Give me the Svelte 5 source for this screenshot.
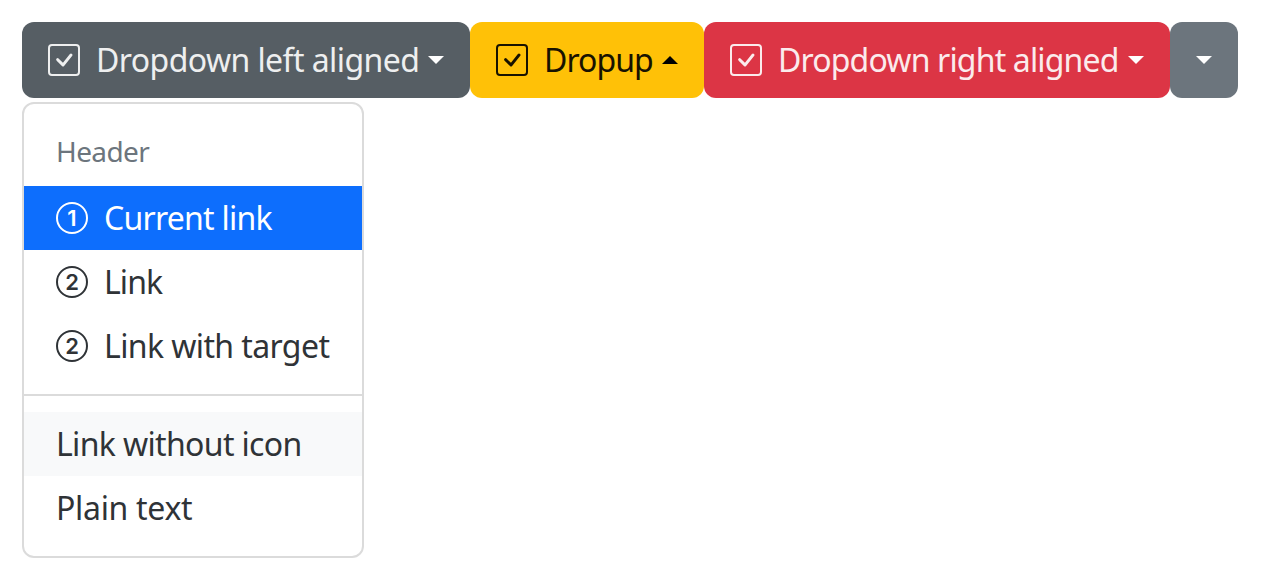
<script>
  const buttons = [
    { kind: 'dark', label: 'Dropdown left aligned', spacing: -0.58, caret: 'down', width: 448 },
    { kind: 'warning', label: 'Dropup', spacing: -0.95, caret: 'up', width: 234 },
    { kind: 'danger', label: 'Dropdown right aligned', spacing: -0.84, caret: 'down', width: 466 },
    { kind: 'secondary', label: '', spacing: 0, caret: 'down', width: 68 }
  ];
  const links = [
    { label: 'Current link', digit: '1', active: true, spacing: -0.76 },
    { label: 'Link', digit: '2', active: false, spacing: -0.9 },
    { label: 'Link with target', digit: '2', active: false, spacing: -0.6 }
  ];
  const plain = [
    { label: 'Link without icon', hover: true, spacing: -0.65 },
    { label: 'Plain text', hover: false, spacing: -0.3 }
  ];
</script>

<main>
  <div class="toolbar">
    {#each buttons as b}
      <button class="btn {b.kind}" class:bare={!b.label} style="width: {b.width}px" aria-label={b.label || 'More'}>
        {#if b.label}
          <svg class="icon" viewBox="0 0 16 16" fill="currentColor">
            <path d="M14 1a1 1 0 0 1 1 1v12a1 1 0 0 1-1 1H2a1 1 0 0 1-1-1V2a1 1 0 0 1 1-1zM2 0a2 2 0 0 0-2 2v12a2 2 0 0 0 2 2h12a2 2 0 0 0 2-2V2a2 2 0 0 0-2-2z" />
            <path d="M10.97 4.97a.75.75 0 0 1 1.071 1.05l-3.992 4.99a.75.75 0 0 1-1.08.02L4.324 8.384a.75.75 0 1 1 1.06-1.06l2.094 2.093 3.473-4.425z" />
          </svg>
          <span class="label" style="letter-spacing: {b.spacing}px">{b.label}</span>
        {/if}
        <svg class="caret" viewBox="0 0 16 8" fill="currentColor">
          <path d={b.caret === 'up' ? 'M0 8 8 0l8 8z' : 'M0 0h16L8 8z'} />
        </svg>
      </button>
    {/each}
  </div>

  <div class="menu">
    <div class="header">Header</div>
    {#each links as l}
      <div class="item" class:active={l.active}>
        <svg class="icon" viewBox="0 0 32 32">
          <circle cx="16" cy="16" r="15" fill="none" stroke="currentColor" stroke-width="2" />
          <text x="16" y="24" text-anchor="middle" fill="currentColor">{l.digit}</text>
        </svg>
        <span style="letter-spacing: {l.spacing}px">{l.label}</span>
      </div>
    {/each}
    <div class="divider"></div>
    {#each plain as p}
      <div class="item" class:hover={p.hover}>
        <span style="letter-spacing: {p.spacing}px">{p.label}</span>
      </div>
    {/each}
  </div>
</main>

<style>
  :global(body) {
    background: #fff;
  }
  main {
    box-sizing: border-box;
    width: 1262px;
    height: 582px;
    padding: 22px;
    overflow: hidden;
    font-family: 'Noto Sans', 'Open Sans', sans-serif;
    font-size: 32px;
    color: #2f3337;
  }
  .toolbar {
    display: flex;
  }
  .btn {
    box-sizing: border-box;
    flex: none;
    display: flex;
    align-items: center;
    height: 76px;
    padding: 0 26px;
    border: 0;
    border-radius: 12px;
    font: inherit;
    color: #fff;
    text-align: left;
  }
  .btn.bare {
    justify-content: center;
  }
  .dark {
    background: #565e64;
  }
  .warning {
    background: #ffc107;
    color: #000;
  }
  .danger {
    background: #dc3545;
  }
  .secondary {
    background: #6c757d;
  }
  .icon {
    flex: none;
    display: block;
    width: 32px;
    height: 32px;
    margin-right: 16px;
  }
  .icon text {
    font-family: Inter, sans-serif;
    font-size: 22px;
    font-weight: 600;
  }
  .label,
  .item span {
    white-space: nowrap;
  }
  .btn .label {
    line-height: 42px;
    opacity: 0.9;
  }
  .btn .icon {
    opacity: 0.9;
  }
  .caret {
    flex: none;
    display: block;
    width: 16px;
    height: 8px;
    margin-left: auto;
  }
  .bare .caret {
    margin: 0;
  }
  .menu {
    box-sizing: border-box;
    width: 342px;
    margin-top: 4px;
    padding: 16px 0;
    border: 2px solid #dbdbdb;
    border-radius: 12px;
    background: #fff;
  }
  .header {
    height: 66px;
    padding: 0 32px;
    line-height: 62px;
    font-size: 28px;
    letter-spacing: -0.6px;
    color: #6c757d;
  }
  .item {
    display: flex;
    align-items: center;
    height: 64px;
    padding: 0 32px;
    line-height: 64px;
  }
  .active {
    background: #0d6efd;
    color: #fff;
  }
  .hover {
    background: #f8f9fa;
  }
  .divider {
    height: 2px;
    margin: 16px 0;
    background: #dbdbdb;
  }
</style>
